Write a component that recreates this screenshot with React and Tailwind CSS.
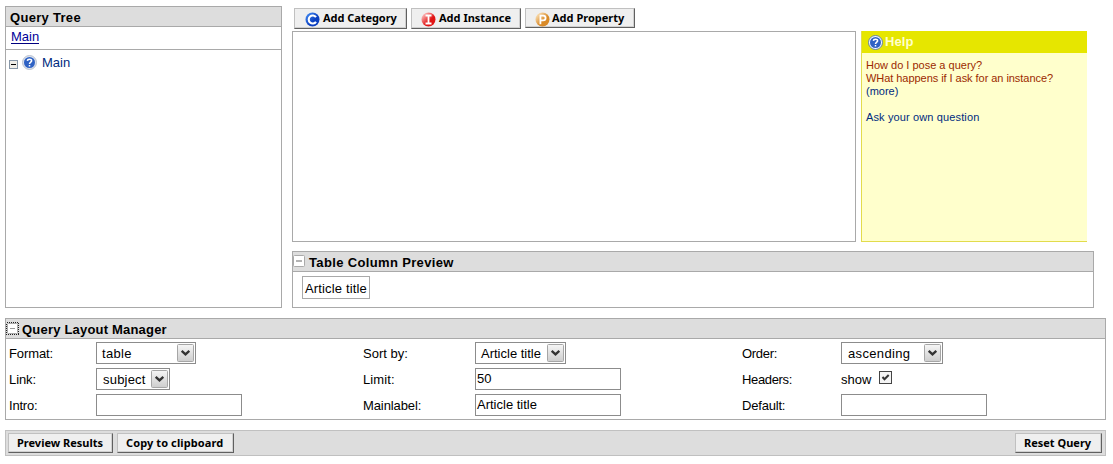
import React from "react";

const panel = "border border-[#a9a9a9] bg-white";
const header = "flex bg-[#dddddd] border-b border-[#a9a9a9] font-bold text-[13px] leading-[15px] whitespace-nowrap";
const small = "font-['Noto_Sans',sans-serif] font-bold text-[11px] leading-[14px] whitespace-nowrap";
const bevel = "flex shrink-0 bg-[#efefef] border border-t-[#c0c0c0] border-l-[#c0c0c0] border-r-[#606060] border-b-[#606060] shadow-[inset_-1px_-1px_0_#d0d0d0] text-left";

function LetterIcon({ kind }) {
  const colors = { C: ["#3f86f0", "#0b3fc0"], I: ["#ffc4c4", "#e01414"], P: ["#fbe2ba", "#d98a28"] }[kind];
  return (
    <svg className="w-[15px] h-[15px] shrink-0" viewBox="0 0 15 15">
      <defs>
        <linearGradient id={"ball" + kind} x1="0.1" y1="0.1" x2="0.8" y2="0.8">
          <stop offset="0" stopColor={colors[0]} />
          <stop offset="0.7" stopColor={colors[1]} />
        </linearGradient>
      </defs>
      <circle cx="7.5" cy="7.5" r="7" fill={`url(#ball${kind})`} />
      {kind === "C" && <path d="M11 5.2A4 4 0 1 0 11 9.8" fill="none" stroke="#fff" strokeWidth="2.1" />}
      {kind === "I" && <path d="M4.5 3.5H10.5M4.5 11.5H10.5M7.5 3.5V11.5" fill="none" stroke="#fff" strokeWidth="1.8" />}
      {kind === "P" && <path d="M5.4 12.3V3.6H8.2A2.4 2.4 0 0 1 8.2 8.4H5.4" fill="none" stroke="#fff" strokeWidth="1.8" />}
    </svg>
  );
}

function QuestionIcon({ pale }) {
  return (
    <svg className="w-[15px] h-[15px] shrink-0" viewBox="0 0 15 15">
      <circle cx="7.5" cy="7.5" r="7" fill={pale ? "#dbe2ee" : "#f4f8ff"} stroke={pale ? "#b4bccb" : "#5577a8"} strokeWidth="0.9" />
      <circle cx="7.5" cy="7.5" r="5.5" fill="#2f62c4" />
      <path d="M5.4 5.9C5.5 3.6 9.8 3.6 9.6 5.9C9.5 7.2 7.6 7.2 7.5 9M7.5 10.1V11.6" fill="none" stroke="#fff" strokeWidth="1.5" />
    </svg>
  );
}

function Collapse({ dotted }) {
  return (
    <svg className="w-[13px] h-[13px] shrink-0" viewBox="0 0 13 13">
      <rect x={dotted ? 1.5 : 0.5} y={dotted ? 1.5 : 0.5} width={dotted ? 10 : 11} height={dotted ? 10 : 11} rx="1" fill="#fff" stroke="#aaa" />
      {dotted && <rect x="0.5" y="0.5" width="12" height="12" fill="none" stroke="#222" strokeDasharray="1 1" shapeRendering="crispEdges" />}
      <path d={dotted ? "M4 6.5H9" : "M3 6H9"} stroke="#999" strokeWidth={dotted ? 1 : 1.5} />
    </svg>
  );
}

function Select({ className, text, textClass }) {
  return (
    <div className={"flex h-[22px] justify-between border border-[#8c8c8c] bg-white p-px " + className}>
      <span className={"leading-[19px] " + textClass}>{text}</span>
      <svg className="w-[17px] h-[18px] shrink-0" viewBox="0 0 17 18">
        <defs>
          <linearGradient id="arrowface" x1="0" y1="0" x2="0" y2="1">
            <stop offset="0" stopColor="#f6f6f6" />
            <stop offset="1" stopColor="#cdcdcd" />
          </linearGradient>
        </defs>
        <rect x="0.5" y="0.5" width="16" height="17" rx="1" fill="url(#arrowface)" stroke="#a6a6a6" />
        <path d="M4.7 6.8L8.5 10.4L12.3 6.8" fill="none" stroke="#333" strokeWidth="2.3" />
      </svg>
    </div>
  );
}

function Input({ text, className = "" }) {
  return (
    <div className="h-[22px] w-[146px] border border-[#8c8c8c] bg-white pl-px leading-[19px]">
      <span className={className}>{text}</span>
    </div>
  );
}

function HelpBox() {
  return (
    <div className="ml-[5px] flex h-[211px] w-[226px] flex-col border-b border-l border-[#e2dc4c] bg-[#ffffcc]">
      <div className="flex h-[22px] items-start bg-[#e6e600] pl-[6px] pt-1">
        <QuestionIcon />
        <span className="ml-[2px] -mt-px text-[13px] font-bold leading-[15px] tracking-[0.1px] text-[#ffffcc]">Help</span>
      </div>
      <div className="whitespace-nowrap pl-1 pt-[6px] text-[11px] leading-[13px] text-[#002b80]">
        <div className="tracking-[0px] text-[#9c2a00]">How do I pose a query?</div>
        <div className="tracking-[-0.05px] text-[#9c2a00]">WHat happens if I ask for an instance?</div>
        <div>(more)</div>
        <div className="mt-[13px] tracking-[0.13px]">Ask your own question</div>
      </div>
    </div>
  );
}

export default function App() {
  return (
    <div className="h-[464px] w-[1113px] overflow-hidden bg-white pl-[5px] pt-[6px] font-['Liberation_Sans',Arial,sans-serif] text-[13px] text-black">
      <div className="flex h-[302px]">
        <div className={panel + " w-[277px]"}>
          <div className={header + " h-[20px] pl-1 pt-[3px]"}>
            <span className="tracking-[0.3px]">Query Tree</span>
          </div>
          <div className="flex h-[23px] items-start border-b border-[#a9a9a9] pl-[5px] pt-[2px]">
            <a className="h-[15px] border-b border-[#000080] leading-[15px] text-[#000099]">Main</a>
          </div>
          <div className="flex pl-[3px] pt-[5px] text-[#002b80]">
            <svg className="mt-[5px] h-[9px] w-[9px]" viewBox="0 0 9 9">
              <rect x="0.5" y="0.5" width="8" height="8" fill="#f0eee8" stroke="#8797a8" />
              <path d="M2 4.5H7" stroke="#000" />
            </svg>
            <span className="ml-1"><QuestionIcon pale /></span>
            <span className="ml-[5px] leading-[15px]">Main</span>
          </div>
        </div>

        <div className="ml-[10px] flex w-[802px] flex-col">
          <div className="flex h-[25px] gap-x-1 pl-[2px] pt-[2px]">
            <button className={bevel + " h-[21px] w-[113px] pl-[10px] pt-[3px]"}>
              <LetterIcon kind="C" />
              <span className={small + " ml-[3px] -mt-px tracking-[-0.05px]"}>Add Category</span>
            </button>
            <button className={bevel + " h-[21px] w-[110px] pl-[9px] pt-[3px]"}>
              <LetterIcon kind="I" />
              <span className={small + " ml-[3px] -mt-px"}>Add Instance</span>
            </button>
            <button className={bevel + " h-[20px] w-[110px] pl-[9px] pt-[3px]"}>
              <LetterIcon kind="P" />
              <span className={small + " ml-[2px] -mt-px"}>Add Property</span>
            </button>
          </div>
          <div className="flex">
            <div className={panel + " h-[211px] w-[564px]"} />
            <HelpBox />
          </div>
          <div className={panel + " mt-[9px] h-[57px]"}>
            <div className={header + " h-[20px]"}>
              <span className="pt-[3px]"><Collapse /></span>
              <span className="ml-[3px] pt-[3px] tracking-[0.35px]">Table Column Preview</span>
            </div>
            <div className="ml-[9px] mt-1 h-[23px] w-[68px] border border-[#a9a9a9] pl-[2px] leading-[23px] whitespace-nowrap tracking-[0.15px]">Article title</div>
          </div>
        </div>
      </div>

      <div className={panel + " mt-[10px] h-[102px] w-[1101px]"}>
        <div className={header + " h-[20px]"}>
          <span className="pt-[3px]"><Collapse dotted /></span>
          <span className="ml-[3px] pt-[3px] tracking-[0.2px]">Query Layout Manager</span>
        </div>
        <div className="grid grid-cols-[87px_267px_112px_267px_99px_1fr] gap-y-1 pl-[3px] pt-[3px] leading-[23px] whitespace-nowrap">
          <span className="h-[22px] tracking-[-0.1px]">Format:</span>
          <Select className="w-[100px]" text="table" textClass="pl-1 tracking-[0.3px]" />
          <span className="h-[22px]">Sort by:</span>
          <Select className="w-[91px]" text="Article title" textClass="pl-1" />
          <span className="h-[22px] tracking-[-0.3px]">Order:</span>
          <Select className="w-[102px]" text="ascending" textClass="pl-[5px] tracking-[0.35px]" />
          <span className="h-[22px] tracking-[-0.1px]">Link:</span>
          <Select className="w-[74px]" text="subject" textClass="pl-[5px] tracking-[0.2px]" />
          <span className="h-[22px] tracking-[0.1px]">Limit:</span>
          <Input text="50" />
          <span className="h-[22px] tracking-[-0.35px]">Headers:</span>
          <div className="flex h-[22px]">
            <span>show</span>
            <svg className="ml-[8px] mt-[3px] h-[13px] w-[13px]" viewBox="0 0 13 13">
              <rect x="0.5" y="0.5" width="12" height="12" fill="#f4f4f4" stroke="#444" />
              <path d="M3.5 6L5.5 8.2L9.7 4" fill="none" stroke="#333" strokeWidth="2" />
            </svg>
          </div>
          <span className="h-[22px] tracking-[-0.2px]">Intro:</span>
          <Input />
          <span className="h-[22px] tracking-[-0.1px]">Mainlabel:</span>
          <Input text="Article title" />
          <span className="h-[22px] tracking-[-0.2px]">Default:</span>
          <Input />
        </div>
      </div>

      <div className="mt-[10px] flex h-[26px] w-[1101px] border border-[#c0c0c0] bg-[#dddddd] pl-[2px] pr-[3px] pt-[2px]">
        <button className={bevel + " h-[20px] w-[105px] pl-2 pt-[2px]"}><span className={small}>Preview Results</span></button>
        <button className={bevel + " ml-1 h-[20px] w-[117px] pl-[8px] pt-[2px]"}><span className={small + " tracking-[0.1px]"}>Copy to clipboard</span></button>
        <button className={bevel + " ml-auto h-[20px] w-[87px] pl-2 pt-[2px]"}><span className={small}>Reset Query</span></button>
      </div>
    </div>
  );
}
